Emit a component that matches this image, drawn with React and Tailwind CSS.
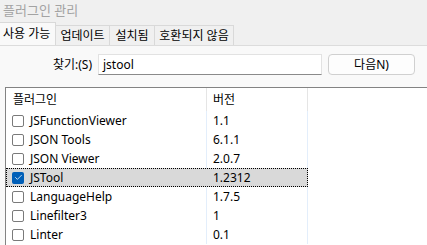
import { Check } from 'lucide-react';

const plugins = [
  { name: 'JSFunctionViewer', version: '1.1' },
  { name: 'JSON Tools', version: '6.1.1' },
  { name: 'JSON Viewer', version: '2.0.7' },
  { name: 'JSTool', version: '1.2312', checked: true, selected: true },
  { name: 'LanguageHelp', version: '1.7.5' },
  { name: 'Linefilter3', version: '1' },
  { name: 'Linter', version: '0.1' },
];

const tabs = ['업데이트', '설치됨', '호환되지 않음'];
const tabWidths = ['w-[54px]', 'w-[45px]', 'w-[79px]'];

const font = { fontFamily: '"Noto Sans", "Noto Sans CJK KR", sans-serif' };

export default function App() {
  return (
    <div
      className="w-[427px] h-[245px] overflow-hidden bg-[#f0f0f0] flex flex-col text-black"
      style={font}
    >
      {/* title */}
      <div className="h-[22px] pl-[3px] flex items-center text-[13px] text-[#a3a3a3]">플러그인 관리</div>

      {/* tabs */}
      <div className="h-[23px] flex items-end">
        <div className="h-[23px] w-[56px] bg-[#f9f9f9] border-r border-t border-[#d9d9d9] flex items-center pl-[3px] text-[12px] pb-[1px]">
          사용 가능
        </div>
        {tabs.map((t, i) => (
          <div
            key={t}
            className={`h-[20px] ${tabWidths[i]} border-r border-t border-[#d9d9d9] flex items-center justify-center text-[12px]`}
          >
            {t}
          </div>
        ))}
      </div>

      {/* content */}
      <div className="flex-1 bg-[#f9f9f9] border-t border-[#dcdcdc] flex flex-col">
        <div className="flex items-center mt-[8px] h-[21px]">
          <div className="w-[93px] text-right pr-[1px] text-[12px]">찾기:(S)</div>
          <div className="ml-[5px] w-[224px] h-[21px] bg-white border border-[#e2e2e2] border-b-[#8a8a8a] flex items-center pl-[4px] text-[12px]">
            jstool
          </div>
          <div className="ml-[6px] w-[87px] h-[21px] rounded-[4px] bg-[#fdfdfd] border border-[#d0d0d0] flex items-center justify-center text-[12px]">
            다음N)
          </div>
        </div>

        <div className="mt-[12px] ml-[5px] w-[440px] flex-1 bg-white border-l border-t border-[#838383] text-[12px]">
          <div className="flex h-[23px]">
            <div className="w-[201px] border-r border-[#e5e5e5] flex items-center pl-[7px]">플러그인</div>
            <div className="w-[101px] border-r border-[#e5e5e5] flex items-center pl-[6px]">버전</div>
          </div>
          {plugins.map((p) => (
            <div
              key={p.name}
              className={`flex h-[19px] w-[302px] ${p.selected ? 'bg-[#d9d9d9] outline-1 outline-dotted outline-black -outline-offset-1' : ''}`}
            >
              <div className={`w-[201px] shrink-0 flex items-center pl-[6px] ${p.selected ? '' : 'border-r border-[#e3eefb]'}`}>
                {p.checked ? (
                  <div className="w-[12px] h-[12px] rounded-[2px] bg-[#005fb8] flex items-center justify-center">
                    <Check size={9} strokeWidth={2} color="#fff" />
                  </div>
                ) : (
                  <div className="w-[12px] h-[12px] rounded-[2px] border border-[#7a7a7a] bg-white" />
                )}
                <span className="ml-[6px]">{p.name}</span>
              </div>
              <div className={`w-[101px] shrink-0 flex items-center pl-[6px] ${p.selected ? '' : 'border-r border-[#e3eefb]'}`}>
                {p.version}
              </div>
            </div>
          ))}
        </div>
      </div>
    </div>
  );
}
